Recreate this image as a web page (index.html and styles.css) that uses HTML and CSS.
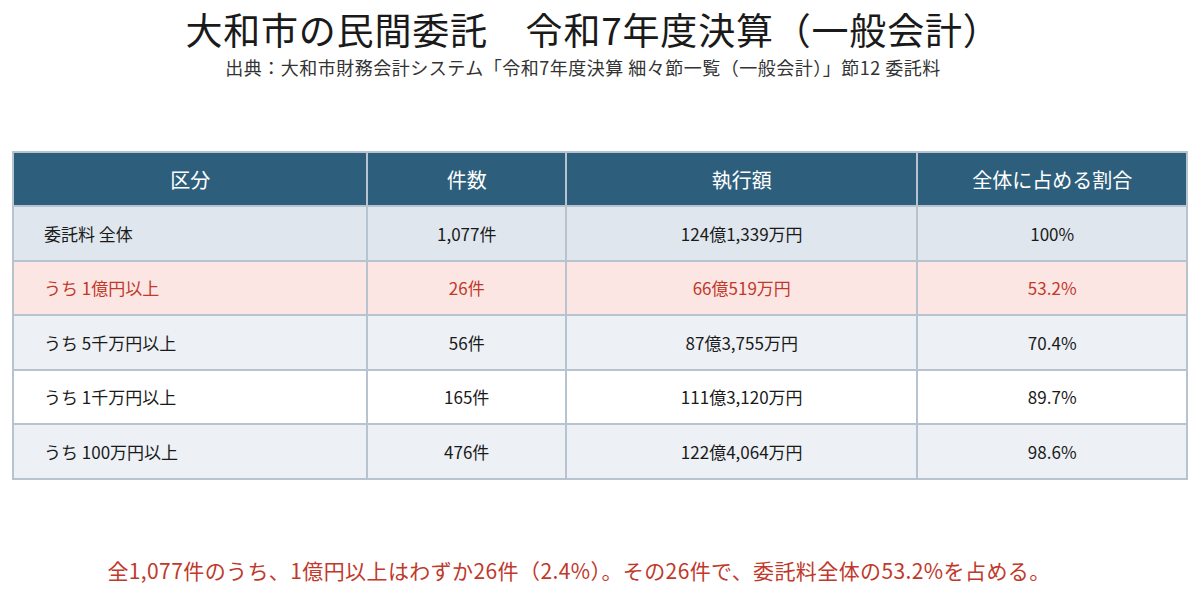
FILE: index.html
```html
<!DOCTYPE html>
<html lang="ja">
<head>
<meta charset="utf-8">
<link rel="stylesheet" href="styles.css">
</head>
<body>
<div class="page">
  <header class="head">
    <h1 class="title">大和市の民間委託　令和7年度決算（一般会計）</h1>
    <p class="source">出典：大和市財務会計システム「令和7年度決算 細々節一覧（一般会計）」節12 委託料</p>
  </header>
  <table class="tbl">
    <colgroup>
      <col class="c1"><col class="c2"><col class="c3"><col class="c4">
    </colgroup>
    <thead>
      <tr><th>区分</th><th>件数</th><th>執行額</th><th>全体に占める割合</th></tr>
    </thead>
    <tbody>
      <tr class="r-total"><td class="lbl">委託料 全体</td><td>1,077件</td><td>124億1,339万円</td><td>100%</td></tr>
      <tr class="r-hi"><td class="lbl">うち 1億円以上</td><td>26件</td><td>66億519万円</td><td>53.2%</td></tr>
      <tr class="r-alt"><td class="lbl">うち 5千万円以上</td><td>56件</td><td>87億3,755万円</td><td>70.4%</td></tr>
      <tr class="r-white"><td class="lbl">うち 1千万円以上</td><td>165件</td><td>111億3,120万円</td><td>89.7%</td></tr>
      <tr class="r-alt"><td class="lbl">うち 100万円以上</td><td>476件</td><td>122億4,064万円</td><td>98.6%</td></tr>
    </tbody>
  </table>
  <p class="note">全1,077件のうち、1億円以上はわずか26件（2.4%）。その26件で、委託料全体の53.2%を占める。</p>
</div>
</body>
</html>
```
FILE: styles.css
```css
* { box-sizing: border-box; }
html, body { margin: 0; padding: 0; background: #ffffff; }
body {
  font-family: "Noto Sans CJK JP", "Noto Sans", sans-serif;
  color: #1a1a1a;
  width: 1200px;
  height: 595px;
  overflow: hidden;
}
.page {
  padding: 0 12px;
  display: flex;
  flex-direction: column;
}
.head {
  display: flex;
  flex-direction: column;
  align-items: stretch;
}
.title {
  margin: 4px 0 0;
  font-size: 37px;
  font-weight: 400;
  line-height: 50px;
  letter-spacing: 0.8px;
  text-align: center;
  padding-right: 14px;
}
.source {
  margin: 1px 0 0;
  font-size: 18px;
  line-height: 24px;
  letter-spacing: 0.5px;
  color: #333;
  text-align: center;
  padding-right: 34px;
}
.tbl {
  margin-top: 72px;
  width: 1176px;
  border-collapse: collapse;
  border: 2px solid #b7c3cf;
  font-size: 17px;
}
.c1 { width: 355px; }
.c2 { width: 199px; }
.c3 { width: 352px; }
.c4 { width: 270px; }
.tbl th {
  background: #2d5f7d;
  color: #ffffff;
  font-weight: 400;
  font-size: 20px;
  height: 54px;
  border: 2px solid #b7c3cf;
  border-top: none;
  text-align: center;
}
.tbl td {
  height: 54.5px;
  border: 2px solid #b7c3cf;
  text-align: center;
}
.tbl td.lbl {
  text-align: left;
  padding-left: 30px;
}
.r-total td { background: #dfe6ed; }
.r-hi td { background: #fce6e3; color: #c0392b; }
.r-alt td { background: #edf1f5; }
.r-white td { background: #ffffff; }
.note {
  margin: 75px 0 0;
  text-align: center;
  color: #c0392b;
  font-size: 21px;
  line-height: 30px;
  letter-spacing: 0.4px;
  padding-right: 42px;
}
```
